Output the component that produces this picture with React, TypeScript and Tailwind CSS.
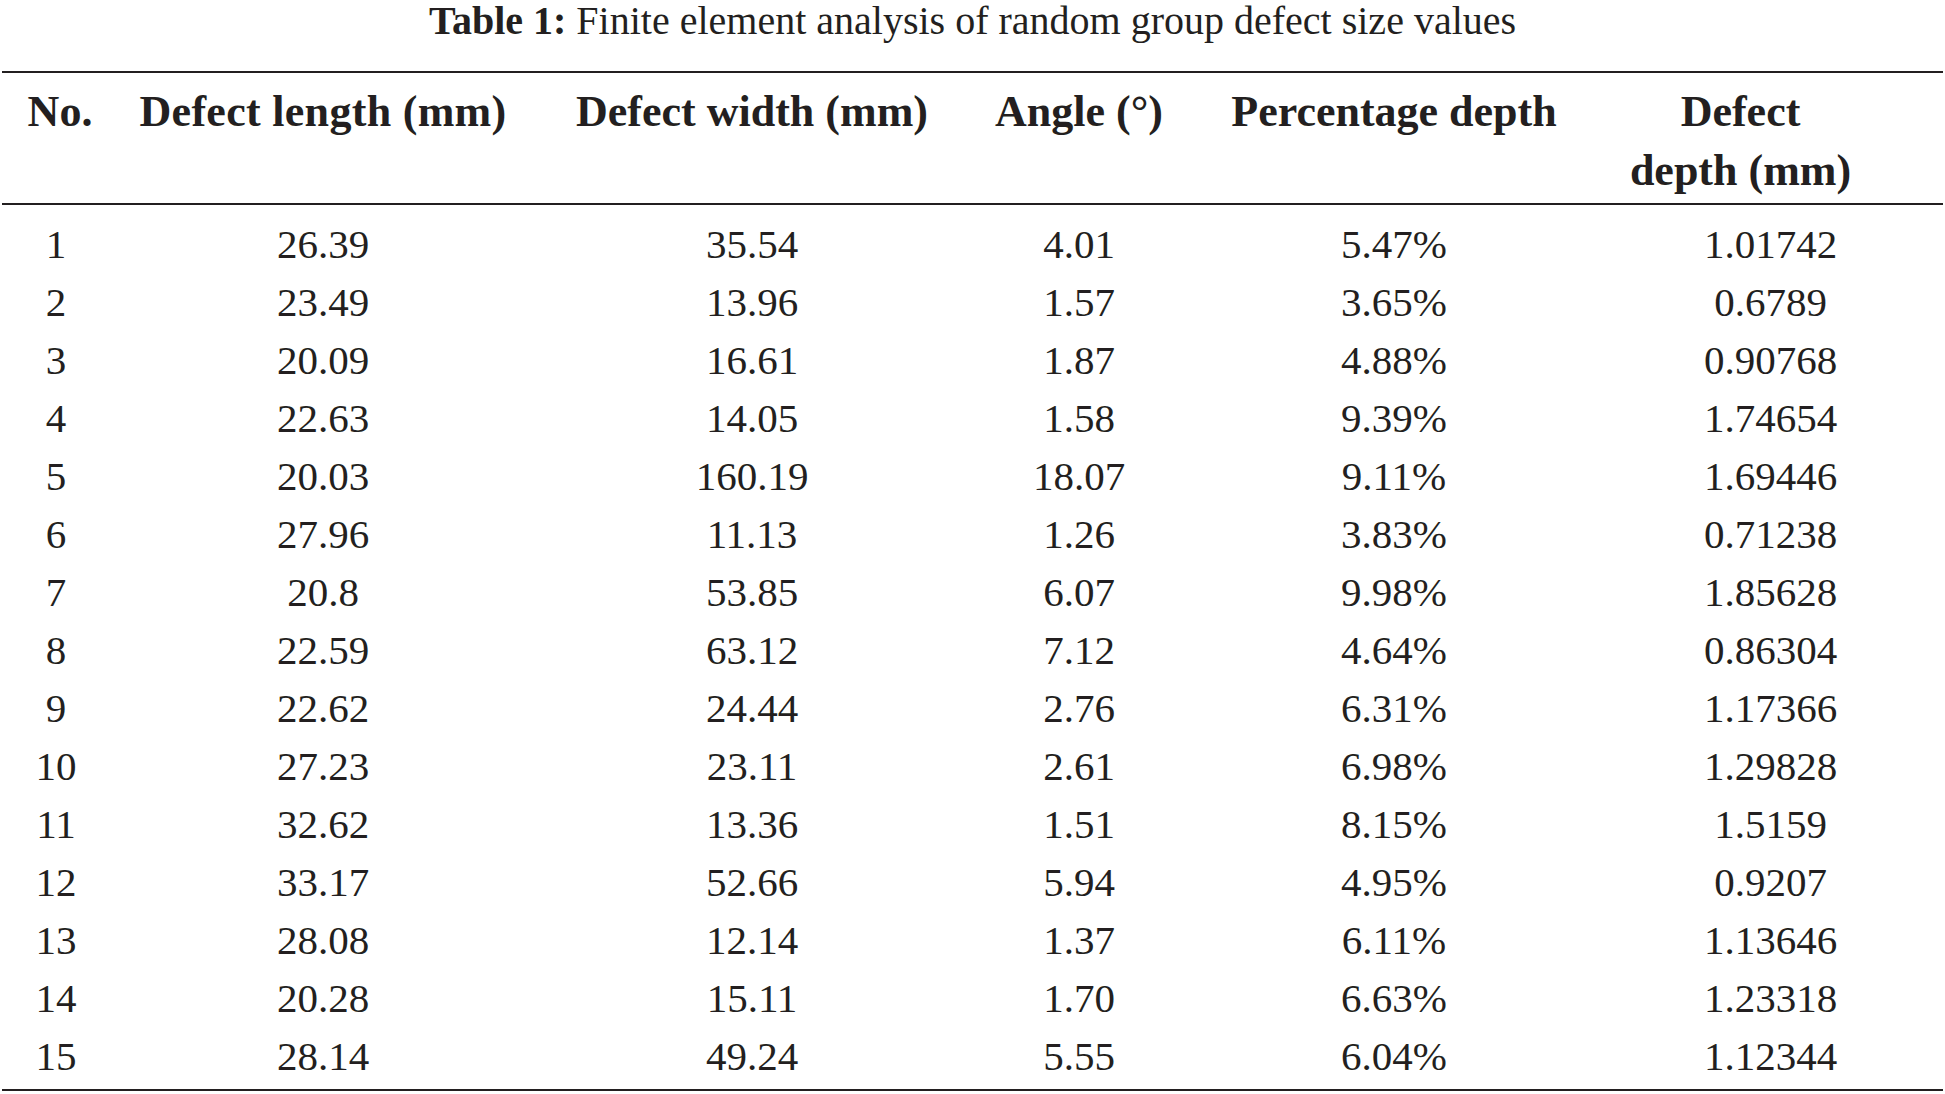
const rows = [
  ["1", "26.39", "35.54", "4.01", "5.47%", "1.01742"],
  ["2", "23.49", "13.96", "1.57", "3.65%", "0.6789"],
  ["3", "20.09", "16.61", "1.87", "4.88%", "0.90768"],
  ["4", "22.63", "14.05", "1.58", "9.39%", "1.74654"],
  ["5", "20.03", "160.19", "18.07", "9.11%", "1.69446"],
  ["6", "27.96", "11.13", "1.26", "3.83%", "0.71238"],
  ["7", "20.8", "53.85", "6.07", "9.98%", "1.85628"],
  ["8", "22.59", "63.12", "7.12", "4.64%", "0.86304"],
  ["9", "22.62", "24.44", "2.76", "6.31%", "1.17366"],
  ["10", "27.23", "23.11", "2.61", "6.98%", "1.29828"],
  ["11", "32.62", "13.36", "1.51", "8.15%", "1.5159"],
  ["12", "33.17", "52.66", "5.94", "4.95%", "0.9207"],
  ["13", "28.08", "12.14", "1.37", "6.11%", "1.13646"],
  ["14", "20.28", "15.11", "1.70", "6.63%", "1.23318"],
  ["15", "28.14", "49.24", "5.55", "6.04%", "1.12344"],
];

const cols = "grid grid-cols-[108px_426px_432px_222px_408px_345px]";

const App = () => {
  return (
    <div className="w-[1945px] h-[1094px] bg-white text-[#231f20] font-['Liberation_Serif',serif]">
      <h1 className="pt-[1px] text-center text-[40px] leading-[40px]">
        <span className="font-bold">Table 1:</span> Finite element analysis of random group defect size values
      </h1>

      <div className="mx-[2px] mt-[30px]">
        <div className="h-[2px] bg-[#231f20]" />

        {/* header */}
        <div className={`${cols} pt-[9px] pb-[3px] text-[44px] leading-[59px] font-bold text-center`}>
          <div className="pl-[8px]">No.</div>
          <div className="tracking-[0.3px]">Defect length (mm)</div>
          <div>Defect width (mm)</div>
          <div>Angle (°)</div>
          <div>Percentage depth</div>
          <div className="pr-[60px]">
            Defect
            <br />
            depth (mm)
          </div>
        </div>

        <div className="h-[2px] bg-[#231f20]" />

        {/* body */}
        <div className="pt-[10px] pb-[4px] text-[41px] leading-[58px]">
          {rows.map((row) => (
            <div key={row[0]} className={`${cols} h-[58px] text-center`}>
              {row.map((cell, i) => (
                <div key={i}>{cell}</div>
              ))}
            </div>
          ))}
        </div>

        <div className="h-[2px] bg-[#231f20]" />
      </div>
    </div>
  );
};

export default App;
